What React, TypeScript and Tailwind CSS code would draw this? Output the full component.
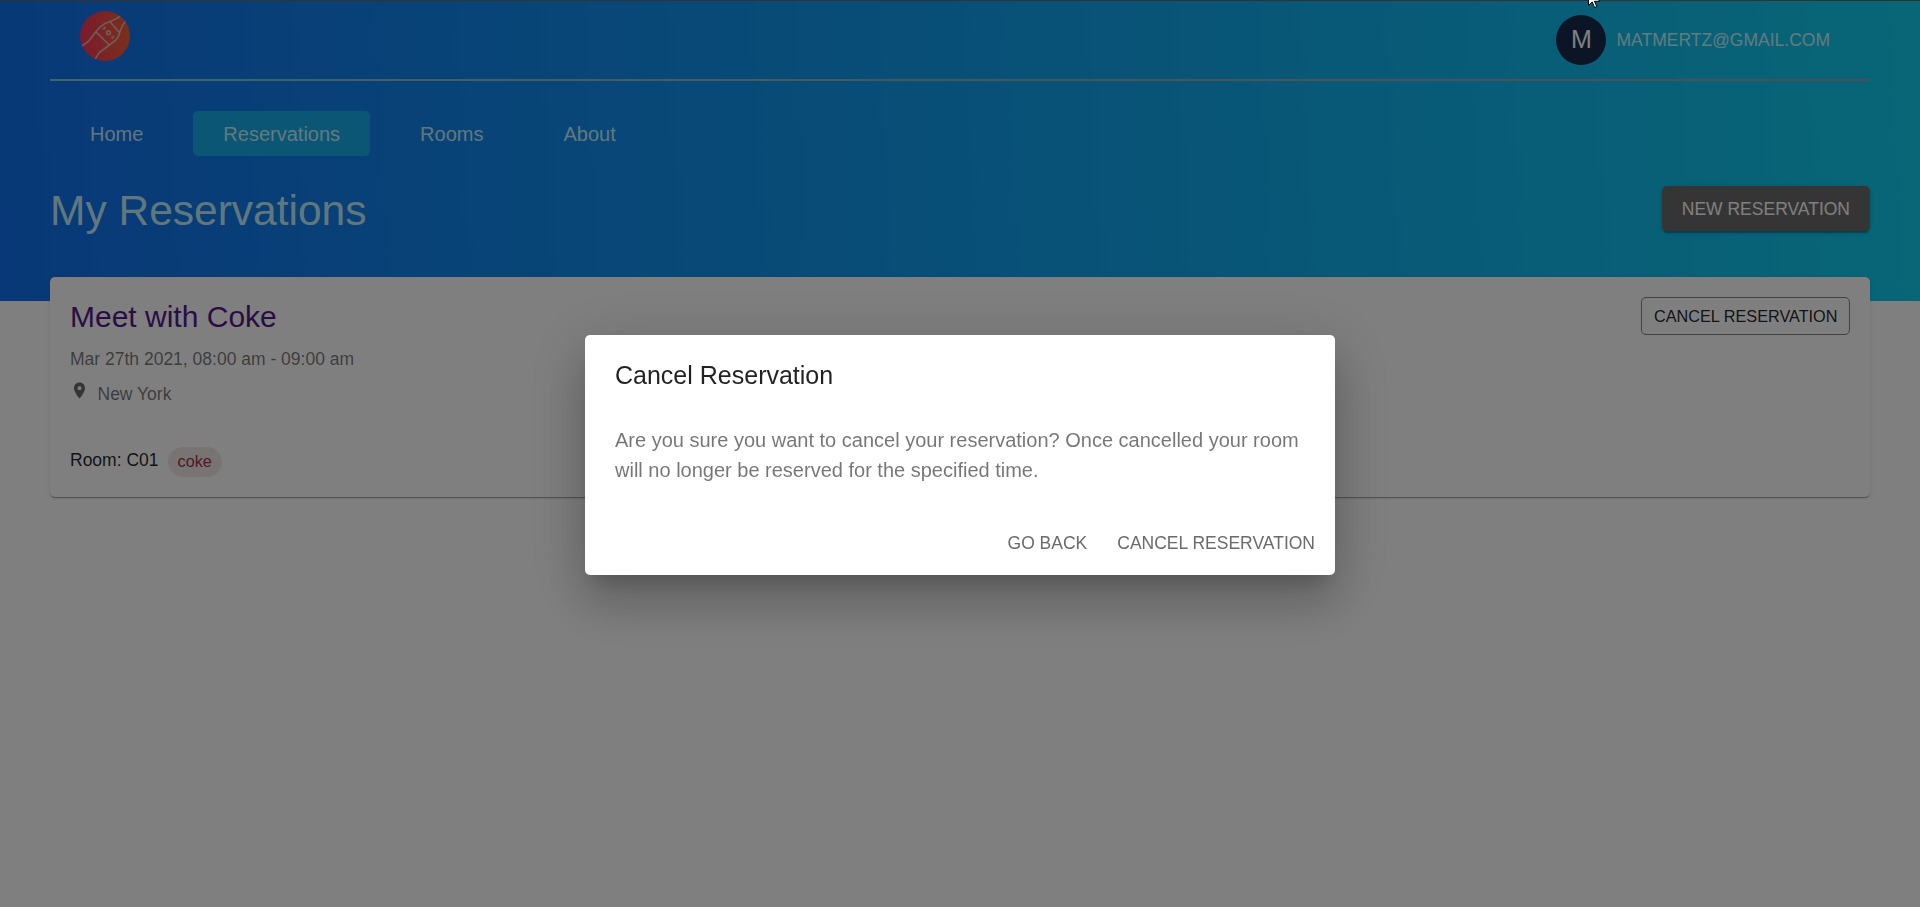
const nav = [
  { label: 'Home', active: false },
  { label: 'Reservations', active: true },
  { label: 'Rooms', active: false },
  { label: 'About', active: false },
]

function Logo() {
  return (
    <svg viewBox="0 0 50 50" className="size-[50px]" fill="none">
      <defs>
        <linearGradient id="logo" x1="0" y1="0" x2="1" y2="0">
          <stop offset="0" stopColor="#f5365c" />
          <stop offset="1" stopColor="#f56036" />
        </linearGradient>
        <clipPath id="disc">
          <circle cx="25" cy="25" r="25" />
        </clipPath>
      </defs>
      <circle cx="25" cy="25" r="25" fill="url(#logo)" />
      <g clipPath="url(#disc)" stroke="#d8d8d0" strokeOpacity="0.75" strokeWidth="1.7">
        <path d="M1 35.500C5 33 8 31 10 28.500C12 26 13.500 23.500 15.700 20.700C18.500 17 21.500 14.500 25 12.500C27.500 11 29 10.800 31.500 10C35 8.500 38 7 41 4.500" />
        <path d="M46 9.500C43.500 12.500 41.500 16 40 20.500C39.300 24 38.800 26 36 29C33.500 31 31.500 32.300 29.300 34C25.500 37.500 22.500 38.800 20 41C17.500 43.500 16.500 46 14.500 49.500" />
        <path d="M15.700 20.700L29.300 34M30 10.700L39.300 21.500" />
        <circle cx="28.500" cy="21.800" r="1.900" strokeWidth="1.700" />
        <path d="M22.500 17.300l1.600.9.300-1.900 1.700.6M31 26.500l1.600.6.400-1.800 1.600.5" strokeWidth="1.200" />
      </g>
    </svg>
  )
}

function Pin() {
  return (
    <svg viewBox="0 0 24 24" className="size-[19px]" fill="#6b6b6b">
      <path d="M12 2C8.130 2 5 5.130 5 9c0 5.250 7 13 7 13s7-7.750 7-13c0-3.870-3.130-7-7-7zm0 9.500c-1.380 0-2.500-1.120-2.500-2.500s1.120-2.500 2.500-2.500 2.500 1.120 2.500 2.500-1.120 2.500-2.500 2.500z" />
    </svg>
  )
}

function Dialog() {
  return (
    <div className="fixed inset-0 flex items-center justify-center bg-black/50 pt-[3px]">
      <div className="flex h-60 w-[750px] flex-col rounded-[5px] bg-white shadow-[0_14px_19px_-9px_rgba(0,0,0,0.2),0_30px_48px_4px_rgba(0,0,0,0.14),0_11px_58px_10px_rgba(0,0,0,0.12)]">
        <h2 className="px-[30px] pt-5 text-[25px] leading-10 text-black/87">Cancel Reservation</h2>
        <p className="px-[30px] pt-[30px] text-[20px] leading-[30px] text-black/54">
          Are you sure you want to cancel your reservation? Once cancelled your room
          <br />
          will no longer be reserved for the specified time.
        </p>
        <div className="mt-auto flex justify-end gap-[30px] px-5 pb-[17px] text-[17.5px] leading-[30px] text-[#6b6b6b]">
          <button>GO BACK</button>
          <button>CANCEL RESERVATION</button>
        </div>
      </div>
    </div>
  )
}

export default function App() {
  return (
    <div className="h-[907px] overflow-hidden bg-white font-['Liberation_Sans',Arial,sans-serif]">
      <header className="h-[301px] border-t border-[#666] bg-[linear-gradient(87deg,#1171ef,#11cdef)] px-[50px] text-[#dcffff]/90">
        <div className="flex h-20 justify-between border-b-2 pl-[30px] pr-[39px] [border-image:linear-gradient(90deg,#80ccd8,#8cacc4_50%,#96a0b8)_1]">
          <div className="pt-2.5">
            <Logo />
          </div>
          <div className="flex h-[78px] items-center gap-2.5 pr-px text-[17.5px]">
            <span className="flex size-[50px] items-center justify-center rounded-full bg-[#172b4d] text-[25px] text-white">M</span>
            <span>MATMERTZ@GMAIL.COM</span>
          </div>
        </div>
        <nav className="mt-[30px] flex h-[45px] gap-5 pl-2.5 text-[20px]">
          {nav.map((n) => (
            <a
              key={n.label}
              className={
                n.active
                  ? 'flex items-center rounded-[5px] bg-[#16adea] px-[30px]'
                  : 'flex items-center px-[30px]'
              }
            >
              {n.label}
            </a>
          ))}
        </nav>
        <div className="mt-[30px] flex items-start justify-between">
          <h1 className="text-[42.5px] leading-[50px]">My Reservations</h1>
          <button className="h-[45px] rounded-[5px] bg-[#6b6b6b] px-5 pt-0.5 text-[17.5px] text-white shadow-[0_4px_1px_-2px_rgba(0,0,0,0.2),0_2px_2px_rgba(0,0,0,0.14),0_1px_6px_rgba(0,0,0,0.12)]">
            NEW RESERVATION
          </button>
        </div>
      </header>

      <main className="relative mx-[50px] -mt-6 flex h-[220px] items-start justify-between rounded-[5px] bg-white p-5 shadow-[0_2px_1px_-1px_rgba(0,0,0,0.2),0_1px_1px_rgba(0,0,0,0.14),0_1px_4px_rgba(0,0,0,0.12)]">
        <div>
          <h3 className="text-[30px] leading-10 text-[#551a8b]">Meet with Coke</h3>
          <p className="mt-[9px] text-[17.5px] leading-[26px] text-black/54">Mar 27th 2021, 08:00 am - 09:00 am</p>
          <div className="mt-[9px] flex h-[26px] gap-[8.5px] text-[17.5px] leading-[26px] text-black/54">
            <Pin />
            <span>New York</span>
          </div>
          <div className="mt-10 flex h-[30px] items-center gap-[9px] text-[17.5px] text-black/87">
            <span className="-mt-[3px]">Room: C01</span>
            <span className="flex h-[30px] items-center rounded-full bg-[#f3e8e8] px-2.5 pb-px text-[16.25px] text-[#a0304a]">coke</span>
          </div>
        </div>
        <button className="h-[38px] rounded-[5px] border border-[#858585] px-[11.5px] text-[16.25px] text-black/87">
          CANCEL RESERVATION
        </button>
      </main>
      <Dialog />
      <svg className="fixed left-[1588px] top-[-11px] h-[20px] w-[13px]" viewBox="0 0 13 20">
        <path d="M.5.500v16l3.700-3.500 2.400 5.500 2.200-1-2.400-5.200h5.400z" fill="#fff" stroke="#000" />
      </svg>
    </div>
  )
}
